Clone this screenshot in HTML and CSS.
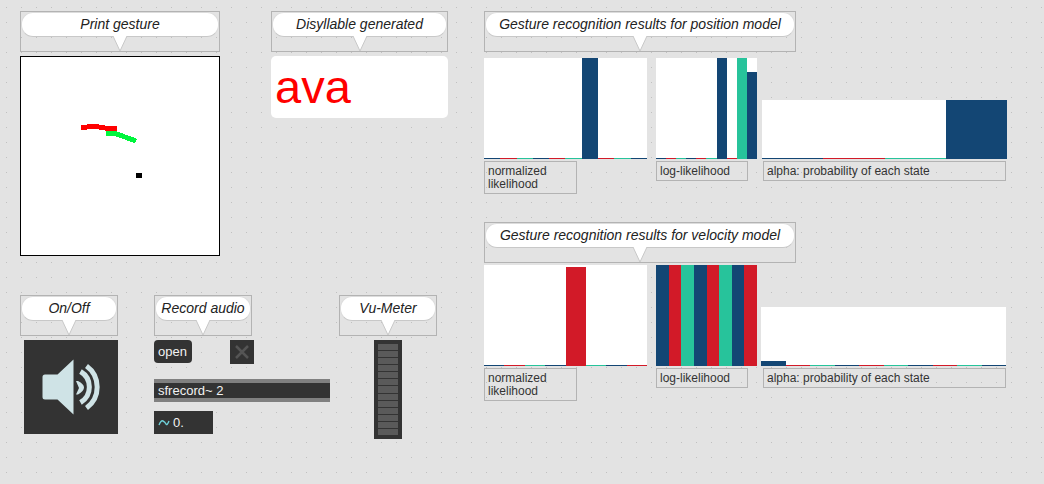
FILE: index.html
```html
<!DOCTYPE html>
<html lang="en">
<head>
    <meta charset="UTF-8">
    <meta name="viewport" content="width=device-width, initial-scale=1.0">
    <title>Gesture patcher</title>

    <link rel="stylesheet" href="styles.css">
</head>
<body>

    <div class="patcher">

        <!-- Gesture display -->
        <div class="callout callout-print">
            <div class="bubble">Print gesture</div>
            <svg class="tail" width="16" height="16" viewBox="0 0 16 16"><path d="M1 0 L8 15 L15 0" fill="#fff" stroke="#c8c8c8"/></svg>
        </div>
        <div class="gesture">
            <svg width="198" height="198" viewBox="0 0 198 198" shape-rendering="crispEdges">
                <path d="M60 71 L66 70 L75 69.5 L84 71 L96 72" fill="none" stroke="#ff0000" stroke-width="5"/>
                <path d="M85 76 L94 76.5 L104 80 L115 84" fill="none" stroke="#00f53d" stroke-width="5"/>
                <rect x="115" y="116" width="6" height="5" fill="#000"/>
            </svg>
        </div>

        <!-- Generated syllable -->
        <div class="callout callout-disyllable">
            <div class="bubble">Disyllable generated</div>
            <svg class="tail" width="16" height="16" viewBox="0 0 16 16"><path d="M1 0 L8 15 L15 0" fill="#fff" stroke="#c8c8c8"/></svg>
        </div>
        <div class="syllable">ava</div>

        <!-- Audio controls -->
        <div class="callout callout-onoff">
            <div class="bubble">On/Off</div>
            <svg class="tail" width="16" height="16" viewBox="0 0 16 16"><path d="M1 0 L8 15 L15 0" fill="#fff" stroke="#c8c8c8"/></svg>
        </div>
        <div class="speaker">
            <svg width="94" height="94" viewBox="0 0 94 94">
                <path d="M21 34.5 H33.5 L49.5 19.5 V74.5 L33.5 59.5 H21 Q18.5 59.5 18.5 57 V37 Q18.5 34.5 21 34.5 Z" fill="#cfe3e6"/>
                <path d="M52 41 L54 41 Q60 44 60 47.5 Q60 51 54 54.5 L52 54.5 L55 48 Z" fill="#cfe3e6"/>
                <path d="M56.5 31.5 A18 18 0 0 1 56.5 62.5" fill="none" stroke="#cfe3e6" stroke-width="5"/>
                <path d="M62.5 26 A26 26 0 0 1 62.5 68" fill="none" stroke="#cfe3e6" stroke-width="5"/>
            </svg>
        </div>

        <div class="callout callout-record">
            <div class="bubble">Record audio</div>
            <svg class="tail" width="16" height="16" viewBox="0 0 16 16"><path d="M1 0 L8 15 L15 0" fill="#fff" stroke="#c8c8c8"/></svg>
        </div>
        <div class="msg-open">open</div>
        <div class="toggle">
            <svg width="24" height="24" viewBox="0 0 24 24"><path d="M6 6 L18 18 M18 6 L6 18" stroke="#555" stroke-width="2.5"/></svg>
        </div>
        <div class="sfrecord">sfrecord~ 2</div>
        <div class="number">
            <svg width="12" height="8" viewBox="0 0 12 8"><path d="M1 6 Q3 1 5 2 T8 5 T11 2" fill="none" stroke="#6fd0d8" stroke-width="1.4"/></svg>
            <span>0.</span>
        </div>

        <div class="callout callout-vu">
            <div class="bubble">Vu-Meter</div>
            <svg class="tail" width="16" height="16" viewBox="0 0 16 16"><path d="M1 0 L8 15 L15 0" fill="#fff" stroke="#c8c8c8"/></svg>
        </div>
        <div class="vu">
            <i></i><i></i><i></i><i></i><i></i><i></i><i></i><i></i><i></i><i></i><i></i><i></i><i></i>
        </div>

        <!-- Position model results -->
        <div class="callout callout-position">
            <div class="bubble">Gesture recognition results for position model</div>
            <svg class="tail" width="16" height="16" viewBox="0 0 16 16"><path d="M1 0 L8 15 L15 0" fill="#fff" stroke="#c8c8c8"/></svg>
        </div>
        <div class="plot pos-norm">
            <b class="blue"></b><b class="red"></b><b class="green"></b><b class="blue"></b><b class="red"></b><b class="green"></b>
            <b class="blue full"></b><b class="red"></b><b class="green"></b><b class="blue"></b>
        </div>
        <div class="plot pos-log">
            <b class="blue"></b><b class="red"></b><b class="green"></b><b class="blue"></b><b class="red"></b><b class="green"></b>
            <b class="blue full"></b><b class="red"></b><b class="green full"></b><b class="blue tall"></b>
        </div>
        <div class="plot pos-alpha">
            <b class="blue"></b><b class="red"></b><b class="green"></b><b class="blue full"></b>
        </div>
        <div class="label pos-norm-label">normalized likelihood</div>
        <div class="label pos-log-label">log-likelihood</div>
        <div class="label pos-alpha-label">alpha: probability of each state</div>

        <!-- Velocity model results -->
        <div class="callout callout-velocity">
            <div class="bubble">Gesture recognition results for velocity model</div>
            <svg class="tail" width="16" height="16" viewBox="0 0 16 16"><path d="M1 0 L8 15 L15 0" fill="#fff" stroke="#c8c8c8"/></svg>
        </div>
        <div class="plot vel-norm">
            <b class="blue"></b><b class="red"></b><b class="green"></b><b class="blue"></b>
            <b class="red peak"></b><b class="green"></b><b class="blue"></b><b class="red"></b>
        </div>
        <div class="plot vel-log">
            <b class="blue full"></b><b class="red full"></b><b class="green full"></b><b class="blue full"></b>
            <b class="red full"></b><b class="green full"></b><b class="blue full"></b><b class="red full"></b>
        </div>
        <div class="plot vel-alpha">
            <b class="blue low"></b><b class="red"></b><b class="green"></b><b class="blue"></b><b class="red"></b>
            <b class="green"></b><b class="blue"></b><b class="red"></b><b class="green"></b><b class="blue"></b>
        </div>
        <div class="label vel-norm-label">normalized likelihood</div>
        <div class="label vel-log-label">log-likelihood</div>
        <div class="label vel-alpha-label">alpha: probability of each state</div>

    </div>

</body>
</html>
```

FILE: styles.css
```css
/* Patcher canvas with its dotted grid */
html, body {
    margin: 0;
    padding: 0;
}

.patcher {
    position: relative;
    width: 1044px;
    height: 484px;
    overflow: hidden;
    background-color: #e3e3e3;
    font-family: "Liberation Sans", Arial, sans-serif;
    color: #222;
}

.patcher::before {
    content: "";
    position: absolute;
    inset: 0;
    background-image: radial-gradient(circle at 0.5px 0.5px, #c0c0c0 0.6px, transparent 0.7px);
    background-size: 15px 15px;
    background-position: 6px 7px;
}

.patcher > * {
    position: absolute;
}

/* Comment callouts */
.callout {
    box-sizing: border-box;
    height: 41px;
    border: 1px solid #b3b3b3;
    top: 11px;
}

.bubble {
    box-sizing: border-box;
    height: 25px;
    background: #fff;
    border: 1px solid #dcdcdc;
    border-bottom-color: #c8c8c8;
    border-radius: 12px;
    font-size: 14px;
    font-style: italic;
    line-height: 23px;
    text-align: center;
    white-space: nowrap;
}

.tail {
    position: absolute;
    left: 50%;
    top: 24px;
    margin-left: -8px;
    display: block;
}

.callout-print { left: 20px; width: 200px; }
.callout-disyllable { left: 271px; width: 177px; }
.callout-position { left: 484px; width: 312px; }
.callout-velocity { left: 484px; width: 312px; top: 222px; }
.callout-onoff { left: 20px; width: 98px; top: 295px; }
.callout-record { left: 154px; width: 98px; top: 295px; }
.callout-vu { left: 339px; width: 98px; top: 295px; }

/* Gesture display */
.gesture {
    left: 20px;
    top: 56px;
    width: 200px;
    height: 200px;
    box-sizing: border-box;
    background: #fff;
    border: 1px solid #000;
}

.gesture svg {
    display: block;
}

.syllable {
    left: 271px;
    top: 56px;
    width: 177px;
    height: 62px;
    background: #fff;
    border-radius: 5px;
    box-sizing: border-box;
    padding-left: 4px;
    color: #ff0000;
    font-size: 47px;
    line-height: 62px;
}

/* Audio objects */
.speaker {
    left: 24px;
    top: 340px;
    width: 94px;
    height: 94px;
    background: #333;
}

.speaker svg, .toggle svg {
    display: block;
}

.msg-open {
    left: 154px;
    top: 340px;
    width: 38px;
    height: 23px;
    box-sizing: border-box;
    padding-left: 4px;
    background: #333;
    border-radius: 4px;
    color: #f2f2f2;
    font-size: 13px;
    line-height: 23px;
}

.toggle {
    left: 230px;
    top: 340px;
    width: 24px;
    height: 24px;
    background: #333;
}

.sfrecord {
    left: 154px;
    top: 379px;
    width: 176px;
    height: 23px;
    box-sizing: border-box;
    padding-left: 4px;
    background: #333;
    border-top: 4px solid #808080;
    border-bottom: 4px solid #808080;
    color: #f2f2f2;
    font-size: 13px;
    line-height: 15px;
}

.number {
    left: 154px;
    top: 411px;
    width: 59px;
    height: 23px;
    box-sizing: border-box;
    padding-left: 4px;
    display: flex;
    align-items: center;
    gap: 3px;
    background: #333;
    color: #f2f2f2;
    font-size: 13px;
}

.vu {
    left: 374px;
    top: 340px;
    width: 28px;
    height: 99px;
    box-sizing: border-box;
    padding: 4px;
    display: flex;
    flex-direction: column;
    gap: 1px;
    background: #333;
}

.vu i {
    display: block;
    flex: 1;
    background: #5a5a5a;
}

/* Multisliders */
.plot {
    display: flex;
    align-items: flex-end;
    background: #fff;
}

.plot b {
    display: block;
    flex: 1;
    height: 1px;
}

.plot .full { height: 100%; }
.plot .tall { height: 86%; }
.plot .peak { height: 98%; }
.plot .low { height: 5px; }

.blue { background: #134674; }
.red { background: #d21a28; }
.green { background: #27c39b; }

.pos-norm { left: 484px; top: 58px; width: 163px; height: 101px; }
.pos-log { left: 656px; top: 58px; width: 101px; height: 101px; }
.pos-alpha { left: 762px; top: 100px; width: 245px; height: 59px; }
.vel-norm { left: 484px; top: 265px; width: 163px; height: 101px; }
.vel-log { left: 656px; top: 265px; width: 101px; height: 101px; }
.vel-alpha { left: 761px; top: 307px; width: 245px; height: 59px; }

/* Small labels under the plots */
.label {
    box-sizing: border-box;
    border: 1px solid #b3b3b3;
    padding: 3px 3px;
    font-size: 12px;
    line-height: 13px;
    color: #333;
}

.pos-norm-label { left: 484px; top: 161px; width: 93px; height: 33px; }
.pos-log-label { left: 656px; top: 161px; width: 92px; height: 20px; }
.pos-alpha-label { left: 763px; top: 161px; width: 243px; height: 20px; }
.vel-norm-label { left: 484px; top: 368px; width: 93px; height: 33px; }
.vel-log-label { left: 656px; top: 368px; width: 92px; height: 20px; }
.vel-alpha-label { left: 763px; top: 368px; width: 243px; height: 20px; }
```
